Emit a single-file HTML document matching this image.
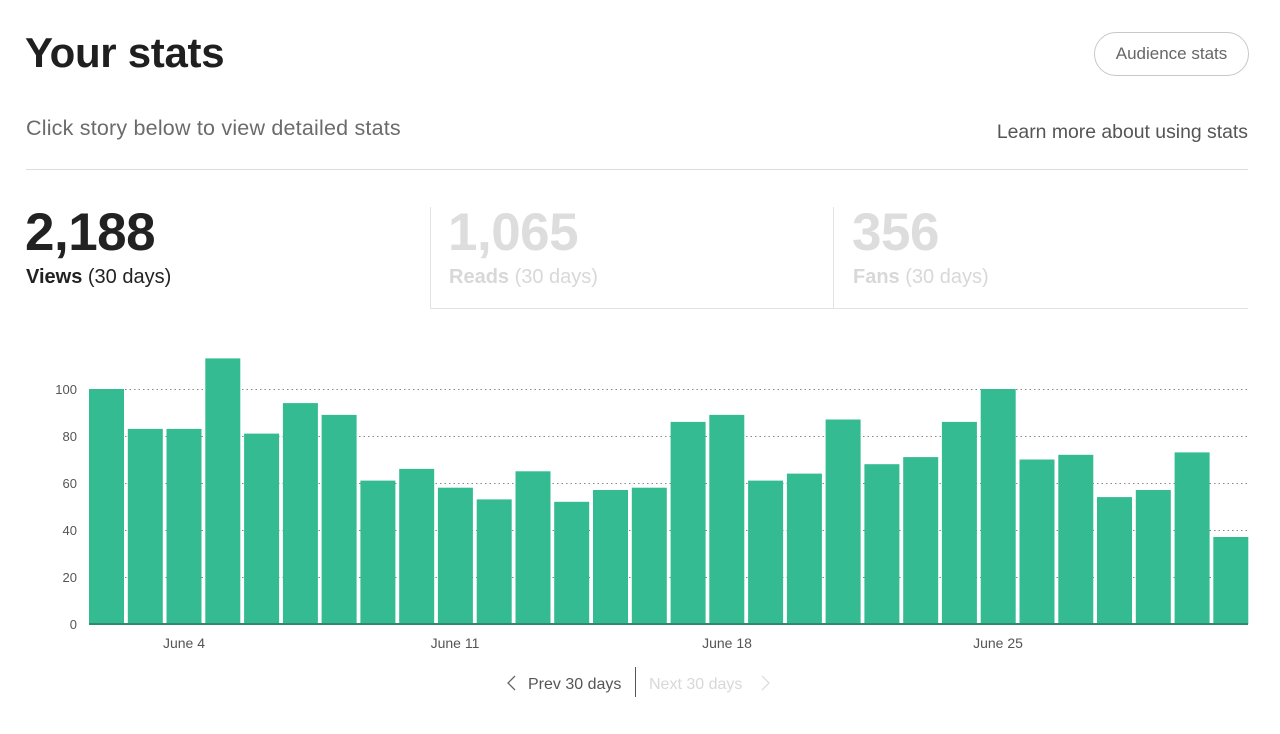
<!DOCTYPE html><html><head><meta charset="utf-8"><style>
body{margin:0;width:1280px;height:734px;background:#fff;font-family:"Liberation Sans",sans-serif;position:relative;overflow:hidden;color:#222}
.a{position:absolute;white-space:nowrap}
</style></head><body>
<div class="a" style="left:25px;top:29px;font-size:42px;font-weight:bold;color:#1f1f1f;letter-spacing:-0.3px">Your stats</div>
<div class="a" style="left:1094px;top:32px;width:155px;height:44px;border:1px solid #c8c8c8;border-radius:22px;box-sizing:border-box;text-align:center;line-height:42px;font-size:17px;color:#666">Audience stats</div>
<div class="a" style="left:26px;top:116px;font-size:21.5px;color:#6b6b6b;letter-spacing:0.2px">Click story below to view detailed stats</div>
<div class="a" style="right:32px;top:121px;font-size:19.4px;color:#555">Learn more about using stats</div>
<div class="a" style="left:26px;top:169px;width:1222px;height:1px;background:#ddd"></div>
<div class="a" style="left:25px;top:202px;font-size:53px;font-weight:bold;color:#222;letter-spacing:-0.5px">2,188</div>
<div class="a" style="left:26px;top:266px;font-size:20px;color:#222"><b>Views</b> (30 days)</div>
<div class="a" style="left:430px;top:207px;width:1px;height:102px;background:#e2e2e2"></div>
<div class="a" style="left:430px;top:308px;width:818px;height:1px;background:#e2e2e2"></div>
<div class="a" style="left:833px;top:207px;width:1px;height:102px;background:#e2e2e2"></div>
<div class="a" style="left:448px;top:202px;font-size:53px;font-weight:bold;color:#ddd;letter-spacing:-0.5px">1,065</div>
<div class="a" style="left:449px;top:266px;font-size:20px;color:#d8d8d8"><b>Reads</b> (30 days)</div>
<div class="a" style="left:852px;top:202px;font-size:53px;font-weight:bold;color:#ddd;letter-spacing:-0.5px">356</div>
<div class="a" style="left:853px;top:266px;font-size:20px;color:#d8d8d8"><b>Fans</b> (30 days)</div>
<svg class="a" style="left:0;top:0" width="1280" height="734">
<g font-family="Liberation Sans,sans-serif" font-size="13" fill="#555" text-anchor="end">
<text x="77" y="394">100</text><text x="77" y="441">80</text><text x="77" y="488">60</text><text x="77" y="535">40</text><text x="77" y="582">20</text><text x="77" y="629">0</text></g>
<g stroke="#888" stroke-dasharray="1.5,3" stroke-width="1">
<line x1="89" x2="1248" y1="389.5" y2="389.5"/><line x1="89" x2="1248" y1="436.5" y2="436.5"/><line x1="89" x2="1248" y1="483.5" y2="483.5"/><line x1="89" x2="1248" y1="530.5" y2="530.5"/><line x1="89" x2="1248" y1="577.5" y2="577.5"/></g>
<g id="b" fill="#35bb91"></g>
<line x1="89" x2="1248" y1="624" y2="624" stroke="#2e8a6c" stroke-width="2"/>
<g font-family="Liberation Sans,sans-serif" font-size="14" fill="#555" text-anchor="middle">
<text x="184" y="648">June 4</text><text x="455" y="648">June 11</text><text x="727" y="648">June 18</text><text x="998" y="648">June 25</text></g>
<path d="M515 676 L508 683 L515 690" fill="none" stroke="#666" stroke-width="1.3"/>
<path d="M762 676 L769 683 L762 690" fill="none" stroke="#ddd" stroke-width="1.3"/>
<line x1="635.5" x2="635.5" y1="667" y2="697" stroke="#555"/>
<g font-family="Liberation Sans,sans-serif" font-size="16"><text x="528" y="689" fill="#555">Prev 30 days</text><text x="649" y="689" fill="#d8d8d8">Next 30 days</text></g>
</svg>
<script>
var v=[100,83,83,113,81,94,89,61,66,58,53,65,52,57,58,86,89,61,64,87,68,71,86,100,70,72,54,57,73,37],g=document.getElementById('b'),s='';
v.forEach(function(d,i){var h=d*2.35;s+='<rect x="'+(89+i*38.77).toFixed(1)+'" y="'+(624-h).toFixed(1)+'" width="35" height="'+h.toFixed(1)+'"/>';});
g.innerHTML=s;
</script>
</body></html>
